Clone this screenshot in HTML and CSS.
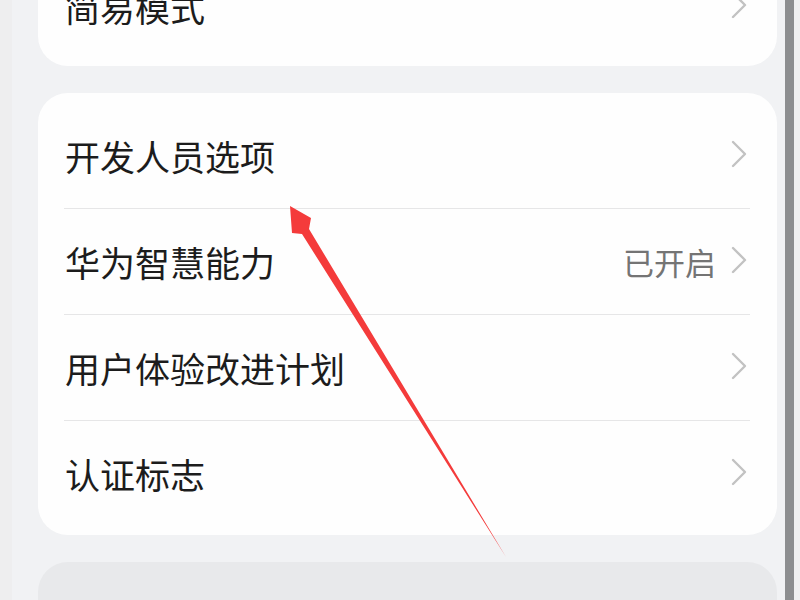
FILE: index.html
```html
<!DOCTYPE html>
<html lang="zh-CN">
  <head>
    <meta charset="UTF-8" />
    <meta name="viewport" content="width=device-width, initial-scale=1.0" />
    <title>系统和更新</title>
    <link rel="stylesheet" href="styles.css">
  </head>
  <body>
    <div class="screen">
      <div class="edge-left"></div>
      <div class="main">
        <div class="card card-top">
          <div class="item">
            <span class="label">简易模式</span>
            <svg class="chevron" viewBox="0 0 16 28"><polyline points="2,2 14,14 2,26" /></svg>
          </div>
        </div>

        <div class="card">
          <div class="item">
            <span class="label">开发人员选项</span>
            <svg class="chevron" viewBox="0 0 16 28"><polyline points="2,2 14,14 2,26" /></svg>
          </div>
          <div class="item">
            <span class="label">华为智慧能力</span>
            <span class="value">已开启</span>
            <svg class="chevron" viewBox="0 0 16 28"><polyline points="2,2 14,14 2,26" /></svg>
          </div>
          <div class="item">
            <span class="label">用户体验改进计划</span>
            <svg class="chevron" viewBox="0 0 16 28"><polyline points="2,2 14,14 2,26" /></svg>
          </div>
          <div class="item">
            <span class="label">认证标志</span>
            <svg class="chevron" viewBox="0 0 16 28"><polyline points="2,2 14,14 2,26" /></svg>
          </div>
        </div>

        <div class="card card-muted"></div>
      </div>
      <div class="scrollbar"></div>
      <div class="edge-right"></div>
    </div>

    <!-- red annotation arrow drawn over the screenshot -->
    <svg class="annotation" viewBox="0 0 800 600">
      <polygon points="290,206 311,218 309,229 506,557 302,234 292,233" />
    </svg>
  </body>
</html>
```

FILE: styles.css
```css
body {
  margin: 0;
  font-family: "Noto Sans CJK SC", "Noto Sans", sans-serif;
  background-color: #f1f2f4;
  overflow: hidden;
}

.screen {
  display: flex;
  width: 800px;
  height: 600px;
  overflow: hidden;
}

.edge-left {
  flex: 0 0 12px;
  background-color: #eeeeef;
}

.main {
  flex: 1;
  min-width: 0;
  display: flex;
  flex-direction: column;
  gap: 27px;
  padding: 0 8px 0 26px;
  margin-top: -56px;
}

.scrollbar {
  flex: 0 0 9px;
  background-color: #8d8e90;
}

.edge-right {
  flex: 0 0 6px;
  background-color: #f0f0f1;
}

.card {
  background-color: #fefefe;
  border-radius: 30px;
  padding: 10px 27px 9px 26px;
}

.card-top {
  padding-bottom: 7px;
}

.card-muted {
  background-color: #e8e9eb;
  height: 80px;
  border-radius: 30px 30px 0 0;
  flex-shrink: 0;
}

.item {
  display: flex;
  align-items: center;
  height: 105px;
  border-bottom: 1px solid #e6e6e7;
}

.item:last-child {
  border-bottom: none;
}

.label {
  flex: 1;
  font-size: 35px;
  color: #1c1c1c;
  padding-left: 1px;
}

.value {
  font-size: 31px;
  color: #747474;
  margin-right: 15px;
}

.chevron {
  width: 16px;
  height: 28px;
  margin-right: 3px;
  margin-top: -3px;
}

.chevron polyline {
  fill: none;
  stroke: #c2c2c2;
  stroke-width: 2.4;
  stroke-linecap: round;
  stroke-linejoin: round;
}

.annotation {
  position: absolute;
  top: 0;
  left: 0;
  width: 800px;
  height: 600px;
  pointer-events: none;
}

.annotation polygon {
  fill: #f43b3b;
}
```
